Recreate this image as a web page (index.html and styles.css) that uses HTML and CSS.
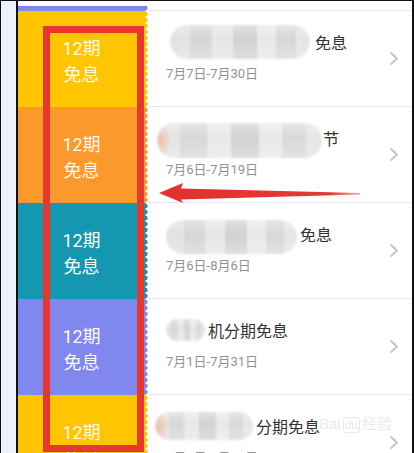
FILE: index.html
```html
<!DOCTYPE html>
<html lang="zh-CN">
<head>
<meta charset="utf-8">
<title>12期免息</title>
<link rel="stylesheet" href="styles.css">
</head>
<body>
<div class="frame">
  <div class="rail"></div>
  <div class="screen">
    <div class="topbar"></div>
    <div class="list">
      <div class="item prev purple">
        <div class="tag"></div>
        <div class="tag-edge"></div>
        <div class="body"><div class="info"></div></div>
      </div>
      <div class="item yellow">
        <div class="tag"><span>12期</span><span>免息</span></div>
        <div class="tag-edge"></div>
        <div class="body">
          <div class="info">
            <div class="title"><span class="blur b1"></span>免息</div>
            <div class="date">7月7日-7月30日</div>
          </div>
          <svg class="chev" viewBox="0 0 8 13"><polyline points="1,1 7,6.5 1,12" /></svg>
        </div>
      </div>
      <div class="item orange">
        <div class="tag"><span>12期</span><span>免息</span></div>
        <div class="tag-edge"></div>
        <div class="body">
          <div class="info">
            <div class="title"><span class="blur peach b2"></span>节</div>
            <div class="date">7月6日-7月19日</div>
          </div>
          <svg class="chev" viewBox="0 0 8 13"><polyline points="1,1 7,6.5 1,12" /></svg>
        </div>
      </div>
      <div class="item teal">
        <div class="tag"><span>12期</span><span>免息</span></div>
        <div class="tag-edge"></div>
        <div class="body">
          <div class="info">
            <div class="title"><span class="blur b3"></span>免息</div>
            <div class="date">7月6日-8月6日</div>
          </div>
          <svg class="chev" viewBox="0 0 8 13"><polyline points="1,1 7,6.5 1,12" /></svg>
        </div>
      </div>
      <div class="item purple">
        <div class="tag"><span>12期</span><span>免息</span></div>
        <div class="tag-edge"></div>
        <div class="body">
          <div class="info">
            <div class="title"><span class="blur b4"></span>机分期免息</div>
            <div class="date">7月1日-7月31日</div>
          </div>
          <svg class="chev" viewBox="0 0 8 13"><polyline points="1,1 7,6.5 1,12" /></svg>
        </div>
      </div>
      <div class="item yellow">
        <div class="tag"><span>12期</span><span>免息</span></div>
        <div class="tag-edge"></div>
        <div class="body">
          <div class="info">
            <div class="title"><span class="blur peach b5"></span>分期免息</div>
            <div class="date">7月1日-7月31日</div>
          </div>
          <svg class="chev" viewBox="0 0 8 13"><polyline points="1,1 7,6.5 1,12" /></svg>
        </div>
      </div>
    </div>
  </div>

  <div class="annot-box"></div>
  <svg class="annot-arrow" viewBox="0 0 204 24">
    <defs>
      <linearGradient id="shaft" x1="0" y1="0" x2="1" y2="0">
        <stop offset="0" stop-color="#e3302c"/>
        <stop offset="0.85" stop-color="#e23a36"/>
        <stop offset="1" stop-color="#e86a66" stop-opacity="0.6"/>
      </linearGradient>
    </defs>
    <polygon points="1,12 25,2 23,7.5 202,12 202,13.5 23,18.5 25,22" fill="url(#shaft)"/>
  </svg>
  <div class="watermark">Bai<span class="wm-box">du</span>经验</div>
</div>
</body>
</html>
```

FILE: styles.css
```css
html, body {
  margin: 0;
  padding: 0;
  background: #ffffff;
}

body {
  font-family: "Roboto", "Noto Sans CJK SC", "Noto Sans", sans-serif;
}

.frame {
  position: relative;
  width: 414px;
  height: 453px;
  box-sizing: border-box;
  border-top: 1px solid #111;
  border-left: 1px solid #111;
  border-right: 2px solid #111;
  display: flex;
  overflow: hidden;
  background: #fff;
}

.rail {
  width: 15px;
  flex: none;
  background: #eef2fb;
  border-right: 2px solid #111;
}

.screen {
  flex: 1;
  min-width: 0;
  display: flex;
  flex-direction: column;
}

.topbar {
  height: 5px;
  flex: none;
  background: #fff;
}

.list {
  flex: 1;
  overflow: hidden;
}

.item {
  display: flex;
  height: 96px;
  --c: #ffc600;
}

.item.prev {
  margin-top: -91px;
}

.yellow { --c: #ffc600; }
.orange { --c: #fb992c; }
.teal { --c: #1697b1; }
.purple { --c: #8088ef; }

.tag {
  width: 127px;
  flex: none;
  box-sizing: border-box;
  padding-top: 5px;
  background: var(--c);
  color: #fffaf0;
  font-size: 18px;
  line-height: 26px;
  display: flex;
  flex-direction: column;
  align-items: center;
  justify-content: center;
}

.tag-edge {
  width: 4px;
  flex: none;
  background: radial-gradient(circle at 0 3px, var(--c) 2.3px, rgba(255,255,255,0) 2.9px) 0 0 / 4px 6px repeat-y;
}

.body {
  flex: 1;
  min-width: 0;
  display: flex;
  align-items: center;
  padding: 0 14px 0 17px;
  border-bottom: 1px solid #e6e6e6;
}

.info {
  flex: 1;
  align-self: flex-start;
  padding-top: 19px;
}

.title {
  display: flex;
  align-items: center;
  height: 24px;
  font-size: 16px;
  color: #333;
  white-space: nowrap;
}

.date {
  margin-top: 11px;
  font-size: 13px;
  line-height: 18px;
  color: #929292;
}

.chev {
  width: 8px;
  height: 13px;
  flex: none;
}

.chev polyline {
  fill: none;
  stroke: #c4c4c4;
  stroke-width: 1.8;
  stroke-linecap: round;
  stroke-linejoin: round;
}

.blur {
  flex: none;
  height: 34px;
  margin: -5px 3px -5px 0;
  border-radius: 17px;
  background:
    linear-gradient(180deg, rgba(255,255,255,0.35), rgba(255,255,255,0) 40%, rgba(255,255,255,0.25)),
    linear-gradient(90deg, #e2e2e2 0 14%, #d6d6d6 14% 30%, #e6e6e6 30% 45%, #d2d2d2 45% 62%, #e8e8e8 62% 76%, #d8d8d8 76% 90%, #e4e4e4 90%);
  filter: blur(1px);
}

.blur.peach {
  background:
    radial-gradient(ellipse 10px 16px at 4px 50%, rgba(240,190,160,0.9), rgba(240,190,160,0) 100%),
    linear-gradient(180deg, rgba(255,255,255,0.35), rgba(255,255,255,0) 40%, rgba(255,255,255,0.25)),
    linear-gradient(90deg, #e4e4e4 0 14%, #d8d8d8 14% 30%, #e8e8e8 30% 45%, #d3d3d3 45% 62%, #e9e9e9 62% 76%, #d9d9d9 76% 90%, #e5e5e5 90%);
}

.b1 { width: 140px; margin-left: 4px; margin-right: 5px; }
.b2 { width: 165px; margin-left: -9px; margin-right: 1px; height: 35px; margin-top: -3px; margin-bottom: -8px; }
.b3 { width: 131px; margin-top: -2px; margin-bottom: -8px; }
.b4 { width: 39px; height: 22px; margin-top: 0; margin-bottom: 0; border-radius: 11px; }
.b5 { width: 98px; margin-left: -11px; height: 28px; margin-top: -2px; margin-bottom: -2px; border-radius: 14px; }

.annot-box {
  position: absolute;
  left: 42px;
  top: 25px;
  width: 101px;
  height: 426px;
  box-sizing: border-box;
  border: 7px solid #e7382f;
}

.annot-arrow {
  position: absolute;
  left: 157px;
  top: 180px;
  width: 204px;
  height: 24px;
}

.watermark {
  position: absolute;
  left: 318px;
  top: 411px;
  font-family: "Liberation Sans", "Noto Sans CJK SC", sans-serif;
  font-size: 15px;
  color: rgba(200, 200, 200, 0.4);
  white-space: nowrap;
}

.wm-box {
  border: 1px solid rgba(200, 200, 200, 0.4);
  border-radius: 3px;
  padding: 0 1px;
  margin: 0 2px;
  font-size: 12px;
}
```
